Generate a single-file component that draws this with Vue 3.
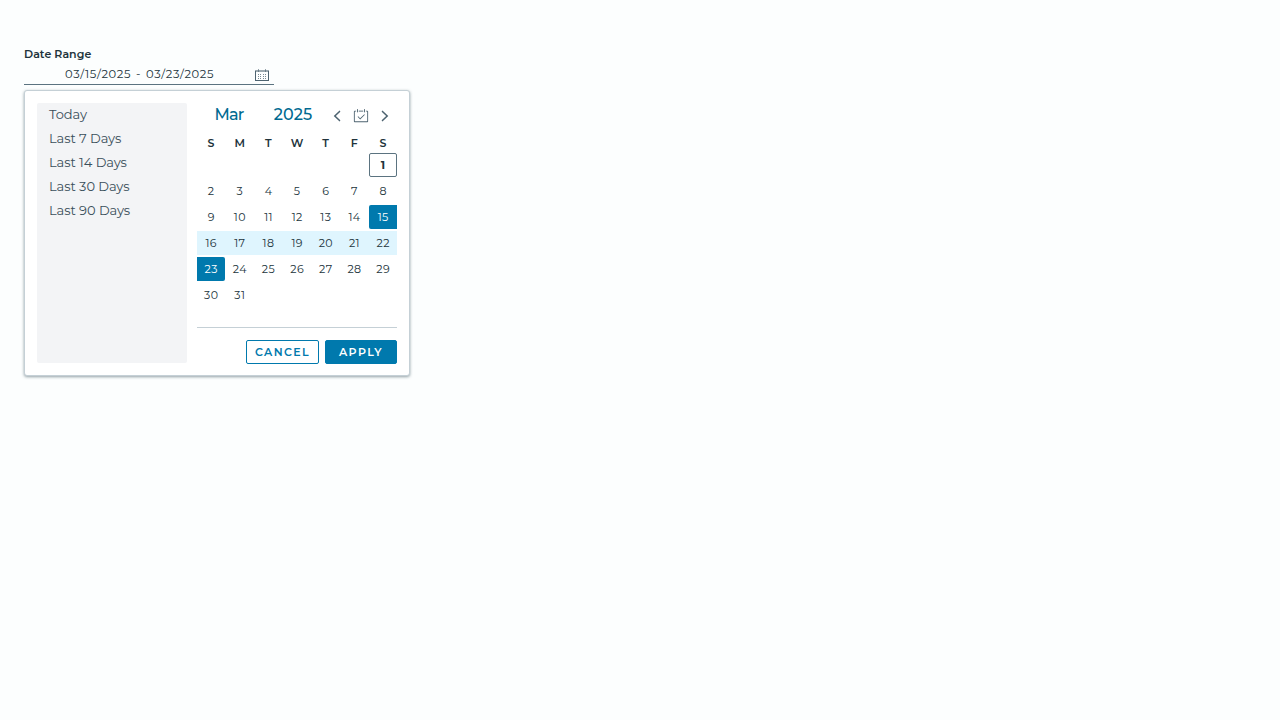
<script setup>
const presets = ['Today', 'Last 7 Days', 'Last 14 Days', 'Last 30 Days', 'Last 90 Days']
const weekdays = ['S', 'M', 'T', 'W', 'T', 'F', 'S']
const days = [...Array(6).fill(null), ...Array.from({ length: 31 }, (_, i) => i + 1), ...Array(5).fill(null)]
const weeks = Array.from({ length: 6 }, (_, i) => days.slice(i * 7, i * 7 + 7))
const dots = [7, 9, 11].flatMap((y) => [4, 6, 9, 11].map((x) => ({ x, y })))
function dayClass(d) {
  return {
    start: d === 15,
    end: d === 23,
    range: d > 15 && d < 23,
    today: d === 1,
  }
}
</script>

<template>
  <main class="page">
    <label class="label">Date Range</label>
    <div class="field">
      <span class="date">03/15/2025</span><span class="dash">-</span><span class="date">03/23/2025</span>
      <svg class="field-icon" viewBox="0 0 16 16">
        <path d="M1 4h1v9h12V4h1v10H1z" />
        <path d="M1 3h14v2H1z" opacity="0.55" />
        <path d="M4 2h1v3H4zM11 2h1v3h-1z" opacity="0.6" />
        <rect v-for="(p, i) in dots" :key="i" :x="p.x" :y="p.y" width="1" height="1" opacity="0.75" />
      </svg>
    </div>
    <section class="panel">
      <div class="presets">
        <button v-for="p in presets" :key="p" class="preset">{{ p }}</button>
      </div>
      <div class="calendar">
        <header class="head">
          <button class="pick month">Mar</button>
          <button class="pick year">2025</button>
          <nav class="nav">
            <svg class="icon" viewBox="0 0 36 36"><path transform="rotate(-90 18 18)" d="M29.52,22.52,18,10.6,6.48,22.52a1.7,1.7,0,0,0,2.45,2.36L18,15.49l9.08,9.39a1.7,1.7,0,0,0,2.45-2.36Z" /></svg>
            <svg class="icon" viewBox="0 0 36 36">
              <path d="M16.17,25.86,10.81,20.5a1,1,0,0,1,1.41-1.41L16.17,23l8.64-8.64a1,1,0,0,1,1.41,1.41Z" />
              <path d="M32.25,6H29V8h3V30H4V8H7V6H3.75A1.78,1.78,0,0,0,2,7.81V30.19A1.78,1.78,0,0,0,3.75,32h28.5A1.78,1.78,0,0,0,34,30.19V7.81A1.78,1.78,0,0,0,32.25,6Z" />
              <path d="M10,10a1,1,0,0,0,1-1V3A1,1,0,0,0,9,3V9A1,1,0,0,0,10,10ZM26,10a1,1,0,0,0,1-1V3a1,1,0,0,0-2,0V9A1,1,0,0,0,26,10Z" />
              <rect x="13" y="6" width="10" height="2" />
            </svg>
            <svg class="icon" viewBox="0 0 36 36"><path transform="rotate(90 18 18)" d="M29.52,22.52,18,10.6,6.48,22.52a1.7,1.7,0,0,0,2.45,2.36L18,15.49l9.08,9.39a1.7,1.7,0,0,0,2.45-2.36Z" /></svg>
          </nav>
        </header>
        <div class="week names">
          <span v-for="(w, i) in weekdays" :key="i" class="cell">{{ w }}</span>
        </div>
        <div v-for="(week, r) in weeks" :key="r" class="week" :class="{ filled: week[0] === 16 }">
          <span v-for="(d, c) in week" :key="c" class="cell" :class="dayClass(d)">{{ d }}</span>
        </div>
        <footer class="actions">
          <button class="btn outline">Cancel</button>
          <button class="btn solid">Apply</button>
        </footer>
      </div>
    </section>
  </main>
</template>

<style>
body { background: #fcfefe; }
</style>

<style scoped>
.page {
  box-sizing: border-box;
  width: 1280px;
  height: 720px;
  padding: 46px 24px 0;
  background: #fcfefe;
  font-family: Metropolis, Montserrat, Inter, "Open Sans", sans-serif;
  color: #21333b;
}
button {
  font-family: inherit;
  border: 0;
  margin: 0;
  padding: 0;
  background: none;
}
.label {
  display: block;
  height: 18px;
  line-height: 17px;
  font-size: 11px;
  font-weight: 600;
  letter-spacing: 0.05px;
}
.field {
  box-sizing: border-box;
  display: flex;
  width: 250px;
  height: 21px;
  padding-left: 41px;
  border-bottom: 1px solid #5b7380;
  line-height: 20px;
  font-size: 11.5px;
  letter-spacing: 0.63px;
}
.date { width: 66px; white-space: nowrap; }
.dash { width: 15px; text-align: center; }
.field-icon {
  width: 16px;
  height: 16px;
  margin: 3px 0 0 42px;
  fill: #4d6370;
}
.panel {
  box-sizing: border-box;
  display: flex;
  width: 386px;
  height: 286px;
  margin-top: 5px;
  padding: 12px 12px 11px;
  border: 1px solid #c5d0d6;
  border-radius: 3px;
  background: #fff;
  box-shadow: 0 1px 3px rgba(90, 110, 120, 0.65);
}
.presets {
  display: flex;
  flex-direction: column;
  width: 150px;
  height: 260px;
  border-radius: 2px;
  background: #f3f4f6;
}
.preset {
  height: 24px;
  padding: 0 0 2px 12px;
  text-align: left;
  line-height: 22px;
  font-size: 13px;
  letter-spacing: -0.05px;
  color: #3a4f5a;
}
.calendar { width: 200px; margin-left: 10px; }
.head { display: flex; height: 28px; }
.pick {
  width: 64px;
  height: 24px;
  line-height: 24px;
  font-size: 16px;
  font-weight: 500;
  color: #006a91;
}
.month { letter-spacing: -0.8px; }
.year { letter-spacing: 0.1px; }
.nav {
  display: flex;
  gap: 8px;
  margin: 5px 0 0 4px;
}
.icon { width: 16px; height: 16px; fill: #4d6370; }
.week {
  display: flex;
  justify-content: space-between;
  height: 24px;
  margin-bottom: 2px;
}
.filled { background: #dff5fe; }
.cell {
  box-sizing: border-box;
  width: 28px;
  padding-left: 0.4px;
  line-height: 24px;
  text-align: center;
  font-size: 11px;
  letter-spacing: 0.4px;
}
.names { height: 22px; margin-bottom: 0; }
.names .cell { font-weight: 600; }
.today {
  border: 1px solid #5b7380;
  border-radius: 2px;
  line-height: 22px;
  font-weight: 700;
}
.start { background: #0079ad; color: #fff; border-radius: 2px 0 0 2px; }
.end { background: #0079ad; color: #fff; border-radius: 0 2px 2px 0; }
.actions {
  display: flex;
  justify-content: flex-end;
  gap: 6px;
  margin-top: 20px;
  padding-top: 12px;
  border-top: 1px solid #c5d0d6;
}
.btn {
  box-sizing: border-box;
  height: 24px;
  border: 1px solid #0079ad;
  border-radius: 2px;
  line-height: 22px;
  font-size: 11px;
  font-weight: 600;
  letter-spacing: 1.4px;
  text-transform: uppercase;
}
.outline { width: 73px; color: #0079ad; }
.solid { width: 72px; color: #fff; background: #0079ad; }
</style>
